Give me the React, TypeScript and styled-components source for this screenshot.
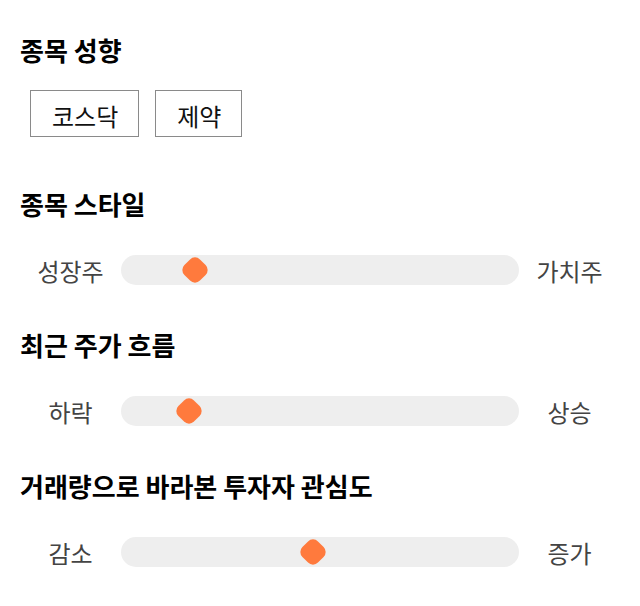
import styled, { createGlobalStyle } from 'styled-components';

const GlobalStyle = createGlobalStyle`
  * {
    box-sizing: border-box;
  }

  body {
    margin: 0;
    background: #ffffff;
    font-family: 'Noto Sans CJK KR', 'Noto Sans', sans-serif;
  }
`;

type SliderItem = {
  title: string;
  left: string;
  right: string;
  value: number; // 0 ~ 100
};

const sliders: SliderItem[] = [
  { title: '종목 스타일', left: '성장주', right: '가치주', value: 16 },
  { title: '최근 주가 흐름', left: '하락', right: '상승', value: 14.5 },
  { title: '거래량으로 바라본 투자자 관심도', left: '감소', right: '증가', value: 48 },
];

const tags = ['코스닥', '제약'];

const App = () => {
  return (
    <>
      <GlobalStyle />
      <Container>
        <Section>
          <Title>종목 성향</Title>
          <TagList>
            {tags.map((tag) => (
              <Tag key={tag}>{tag}</Tag>
            ))}
          </TagList>
        </Section>

        {sliders.map((item) => (
          <Section key={item.title}>
            <Title>{item.title}</Title>
            <SliderRow>
              <SideLabel>{item.left}</SideLabel>
              <Track>
                {/* thumb 위치는 value(%) 기준 */}
                <Thumb style={{ left: `calc((100% - 30px) * ${item.value / 100})` }} />
              </Track>
              <SideLabel>{item.right}</SideLabel>
            </SliderRow>
          </Section>
        ))}
      </Container>
    </>
  );
};

const Container = styled.main`
  display: flex;
  flex-direction: column;
  width: 640px;
  padding: 34px 20px 0;
`;

const Section = styled.section`
  display: flex;
  flex-direction: column;
  margin-bottom: 43px;
`;

const Title = styled.h2`
  margin: 0;
  font-size: 26px;
  font-weight: 700;
  line-height: 32px;
  color: #000000;
`;

const TagList = styled.ul`
  display: flex;
  gap: 16px;
  margin: 24px 0 8px;
  padding: 0 0 0 10px;
  list-style: none;
`;

const Tag = styled.li`
  display: flex;
  justify-content: center;
  align-items: center;
  height: 47px;
  padding: 4px 20px 0 21px;

  border: 1px solid #8a8a8a;
  font-size: 24px;
  color: #111111;
`;

const SliderRow = styled.div`
  display: grid;
  grid-template-columns: 101px 1fr 101px;
  align-items: center;
  margin-top: 34px;
`;

const SideLabel = styled.span`
  padding-top: 2px;
  text-align: center;
  font-size: 24px;
  line-height: 30px;
  color: #444444;
`;

const Track = styled.div`
  position: relative;
  height: 30px;
  border-radius: 15px;
  background-color: #eeeeee;
`;

const Thumb = styled.div`
  position: absolute;
  top: 0;
  width: 30px;
  height: 30px;

  &::before {
    content: '';
    position: absolute;
    top: 4px;
    left: 4px;
    width: 22px;
    height: 22px;
    border-radius: 7px;
    background-color: #ff7a3d;
    transform: rotate(45deg);
  }
`;

export default App;
